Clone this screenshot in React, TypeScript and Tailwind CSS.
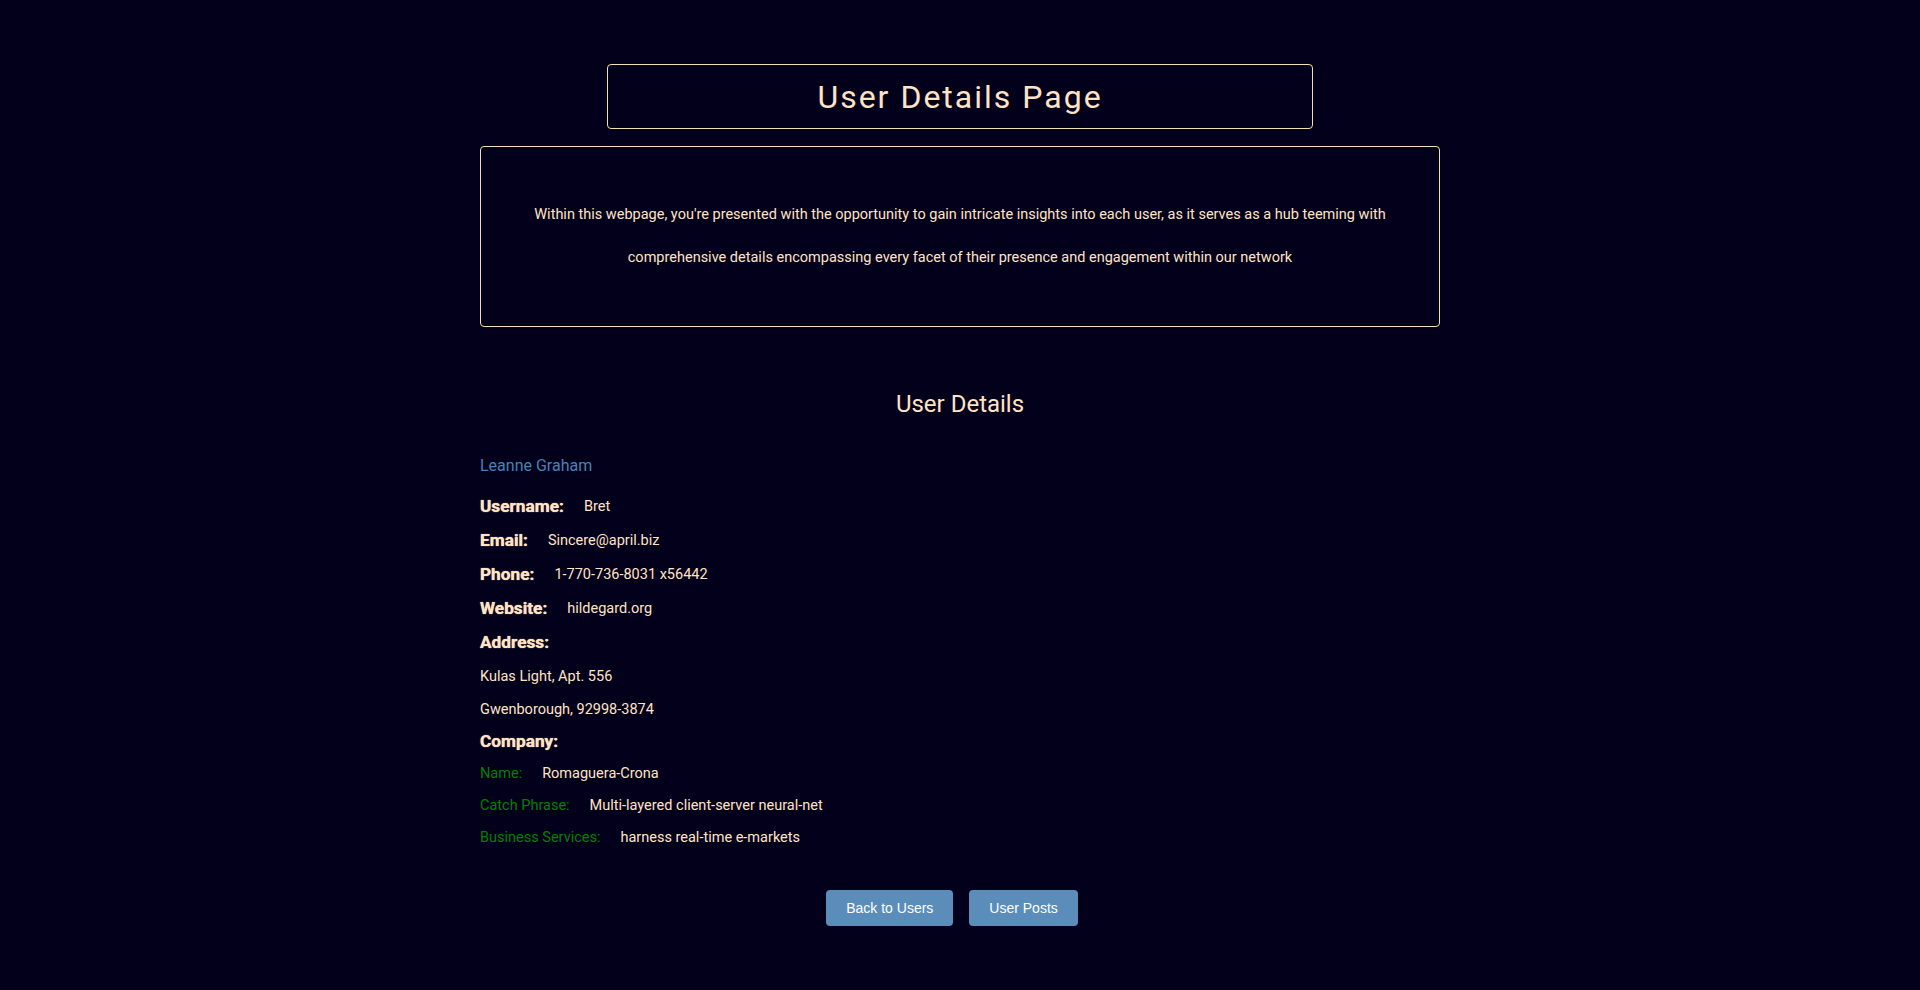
import React from 'react';

const user = {
  name: 'Leanne Graham',
  username: 'Bret',
  email: 'Sincere@april.biz',
  phone: '1-770-736-8031 x56442',
  website: 'hildegard.org',
  address: { street: 'Kulas Light', suite: 'Apt. 556', city: 'Gwenborough', zipcode: '92998-3874' },
  company: {
    name: 'Romaguera-Crona',
    catchPhrase: 'Multi-layered client-server neural-net',
    bs: 'harness real-time e-markets',
  },
};

const Field = ({ label, value }: { label: string; value: string }) => (
  <div className="flex h-[34px] items-center gap-5">
    <span className="text-[17.25px] font-bold [text-shadow:0_0_1px_#ffe4c4]">{label}</span>
    <span className="text-[14.5px]">{value}</span>
  </div>
);

const CompanyField = ({ label, value }: { label: string; value: string }) => (
  <div className="flex h-[32px] items-center gap-5 text-[14.5px]">
    <span className="text-[#008000]">{label}</span>
    <span>{value}</span>
  </div>
);

export default function App() {
  return (
    <div className="min-h-[990px] bg-[#03001c] text-[#ffe4c4] font-['Roboto',sans-serif] pt-[64px]">
      <div className="mx-auto flex h-[65px] w-[706px] items-center justify-center rounded border border-[#f5deb3]">
        <h1 className="text-[32px] leading-none tracking-[2px]">User Details Page</h1>
      </div>

      <div className="mx-auto mt-[17px] w-[960px] rounded border border-[#f5deb3] px-10 pt-[46px] pb-[47px] text-center text-[14.5px] leading-[43px]">
        <p>
          Within this webpage, you're presented with the opportunity to gain intricate insights into each user, as it serves as a hub teeming with
          <br />
          comprehensive details encompassing every facet of their presence and engagement within our network
        </p>
      </div>

      <div className="mx-auto w-[960px]">
        <h2 className="mt-[63px] text-center text-[24px] leading-[28px]">User Details</h2>

        <div className="mt-[38px] text-[16px] leading-5 text-[#4682b4]">{user.name}</div>

        <div className="mt-[14px]">
          <Field label="Username:" value={user.username} />
          <Field label="Email:" value={user.email} />
          <Field label="Phone:" value={user.phone} />
          <Field label="Website:" value={user.website} />
          <div className="flex h-[34px] items-center text-[17.25px] font-bold [text-shadow:0_0_1px_#ffe4c4]">Address:</div>
          <div className="flex h-[33px] items-center text-[14.5px]">
            {user.address.street}, {user.address.suite}
          </div>
          <div className="flex h-[33px] items-center text-[14.5px]">
            {user.address.city}, {user.address.zipcode}
          </div>
          <div className="flex h-[32px] items-center text-[17.25px] font-bold [text-shadow:0_0_1px_#ffe4c4]">Company:</div>
          <CompanyField label="Name:" value={user.company.name} />
          <CompanyField label="Catch Phrase:" value={user.company.catchPhrase} />
          <CompanyField label="Business Services:" value={user.company.bs} />
        </div>

        <div className="mt-[36px] flex justify-center font-['Liberation_Sans',Arial,sans-serif]">
          <button className="mr-4 rounded bg-[#5a8db9] px-5 py-[10px] text-[14px] leading-4 text-white">Back to Users</button>
          <button className="mr-4 rounded bg-[#5a8db9] px-5 py-[10px] text-[14px] leading-4 text-white">User Posts</button>
        </div>
      </div>
    </div>
  );
}
